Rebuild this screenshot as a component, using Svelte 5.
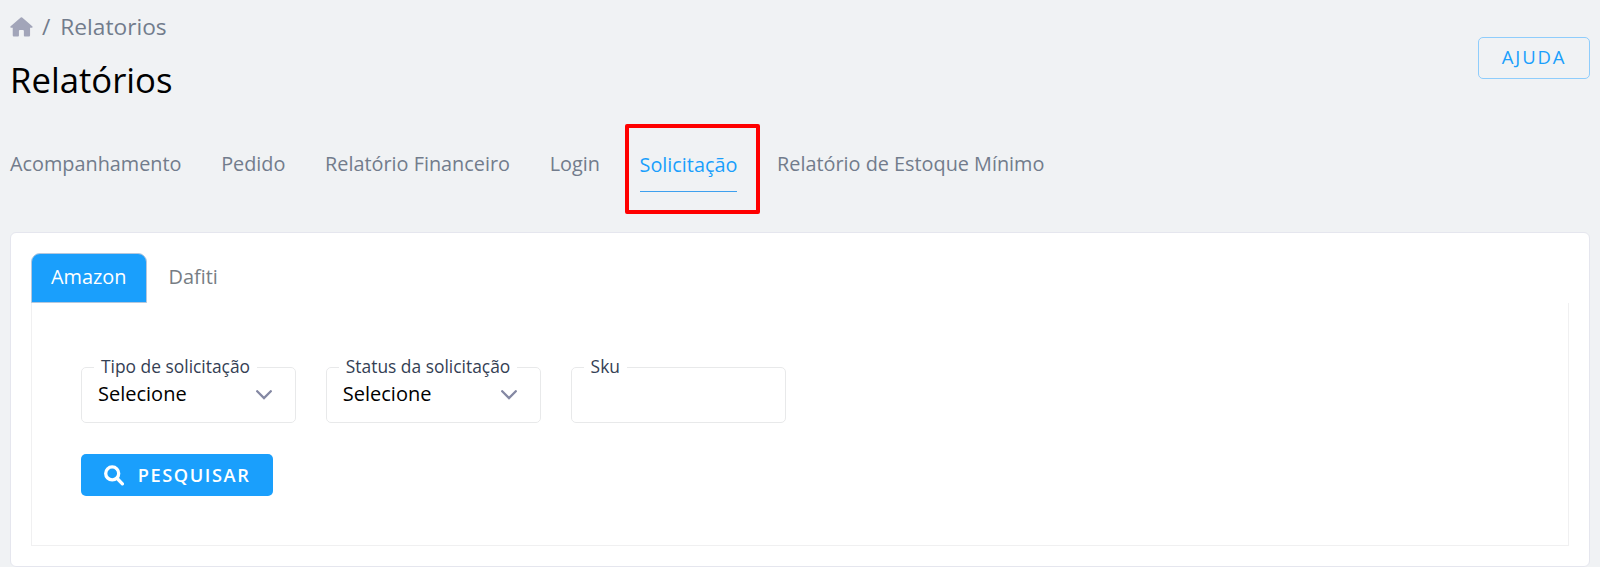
<script lang="ts">
  const reports = [
    'Acompanhamento',
    'Pedido',
    'Relatório Financeiro',
    'Login',
    'Solicitação',
    'Relatório de Estoque Mínimo'
  ];
  const markets = ['Amazon', 'Dafiti'];
  const selects = ['Tipo de solicitação', 'Status da solicitação'];

  let activeReport: string = $state('Solicitação');
  let activeMarket: string = $state('Amazon');
  let sku: string = $state('');
</script>

<div class="page">
  <header class="header">
    <div class="heading">
      <nav class="breadcrumb">
        <svg class="home" viewBox="0 0 24 21" width="23" height="20">
          <path d="M12.7 .5a1.2 1.2 0 0 0-1.5 0L.6 9.6c-.8.7-.4 1.7.5 1.7h1.7v7.8c0 .8.6 1.4 1.4 1.4h3.9c.7 0 1.2-.5 1.2-1.2v-4.4c0-.7.5-1.2 1.2-1.2h2.8c.7 0 1.2.5 1.2 1.2v4.4c0 .7.5 1.2 1.2 1.2h3.9c.8 0 1.4-.6 1.4-1.4v-7.8h1.8c.9 0 1.3-1 .5-1.7z" />
        </svg>
        <span class="slash">/</span>
        <span>Relatorios</span>
      </nav>
      <h1>Relatórios</h1>
    </div>
    <button class="help">AJUDA</button>
  </header>

  <nav class="reports">
    {#each reports as report}
      <button class="report" class:active={report === activeReport} onclick={() => (activeReport = report)}>
        {report}
      </button>
    {/each}
  </nav>

  <section class="card">
    <div class="tabs">
      {#each markets as market}
        <button class="tab" class:active={market === activeMarket} onclick={() => (activeMarket = market)}>
          {market}
        </button>
      {/each}
    </div>
    <div class="pane">
      <div class="fields">
        {#each selects as label}
          <fieldset class="field">
            <legend>{label}</legend>
            <button class="select">
              <span>Selecione</span>
              <svg viewBox="0 0 16 10" width="16" height="10">
                <path d="M1.2 1.2 8 8l6.8-6.8" />
              </svg>
            </button>
          </fieldset>
        {/each}
        <fieldset class="field">
          <legend>Sku</legend>
          <input aria-label="Sku" bind:value={sku} />
        </fieldset>
      </div>
      <button class="search">
        <svg viewBox="0 0 20 21" width="20" height="21">
          <circle cx="8.2" cy="8.4" r="6.5" />
          <path d="m13.2 13.5 5.2 5.3" />
        </svg>
        <span>PESQUISAR</span>
      </button>
    </div>
  </section>
</div>

<style>
  :global(body) {
    margin: 0;
    background: #f0f2f4;
  }
  .page {
    box-sizing: border-box;
    height: 567px;
    padding: 0 10px;
    overflow: hidden;
    font-family: 'Open Sans', 'Noto Sans', sans-serif;
    color: #727c8c;
  }
  button {
    padding: 0;
    border: 0;
    background: none;
    color: inherit;
    font: inherit;
    cursor: pointer;
  }
  .header {
    display: flex;
    justify-content: space-between;
    height: 124px;
  }
  .breadcrumb {
    display: flex;
    align-items: center;
    height: 30px;
    padding-top: 12px;
    font-size: 22.7px;
    line-height: 30px;
  }
  .home {
    margin-right: 9px;
    fill: #a2a5b9;
  }
  .slash {
    margin-right: 10px;
  }
  h1 {
    margin: 12.5px 0 0;
    color: #000;
    font-size: 34.7px;
    font-weight: 400;
    line-height: 50px;
  }
  .help {
    box-sizing: border-box;
    width: 112px;
    height: 42px;
    margin-top: 37px;
    padding-bottom: 3px;
    border: 1px solid #8fcdfc;
    border-radius: 5px;
    color: #1a9ffc;
    font-size: 18.5px;
    letter-spacing: 1.8px;
  }
  .reports {
    display: flex;
    align-items: center;
    height: 90px;
    gap: 39.7px;
    margin-bottom: 18px;
  }
  .report {
    box-sizing: border-box;
    height: 46px;
    padding-bottom: 10px;
    font-size: 19.83px;
    line-height: 28px;
    white-space: nowrap;
  }
  .report.active {
    position: relative;
    padding-bottom: 7px;
    border-bottom: 1px solid #3ea0ee;
    color: #1a9ffc;
  }
  /* highlight frame around the selected report */
  .report.active::after {
    content: '';
    position: absolute;
    inset: -22px -22.5px -23px -15px;
    border: 4px solid #f00;
    border-radius: 2px;
  }
  .card {
    box-sizing: border-box;
    height: 335px;
    padding: 20px 20px 0;
    border: 1px solid #e5e6ee;
    border-radius: 6px;
    background: #fff;
  }
  .tabs {
    display: flex;
    height: 50px;
  }
  .tab {
    box-sizing: border-box;
    height: 50px;
    padding: 0 20px 3px;
    border: 1px solid transparent;
    border-radius: 9px 9px 0 0;
    color: #777d84;
    font-size: 19.9px;
  }
  .tab.active {
    padding: 0 19px 3px;
    border-color: #b5c7dc;
    background: #1a9ffc;
    color: #fff;
  }
  .tab.active + .tab {
    padding-left: 21px;
  }
  .pane {
    box-sizing: border-box;
    height: 243px;
    padding: 53px 49px 0;
    border: 1px solid #f0f0f1;
    border-top: 0;
  }
  .fields {
    display: flex;
    gap: 29.8px;
  }
  .field {
    box-sizing: border-box;
    width: 215px;
    min-width: 0;
    height: 67px;
    margin: 0;
    padding: 0 23px 0 16px;
    border: 1px solid #e8e9ea;
    border-radius: 5px;
  }
  legend {
    height: 22px;
    margin-left: -4px;
    padding: 0 7px;
    color: #344054;
    font-size: 17.4px;
    line-height: 21px;
    white-space: nowrap;
  }
  .select {
    display: flex;
    align-items: center;
    justify-content: space-between;
    width: 100%;
    height: 31px;
    color: #000;
    font-size: 20px;
  }
  .select svg {
    margin-top: 2px;
    fill: none;
    stroke: #8488a3;
    stroke-width: 2.3;
    stroke-linecap: round;
  }
  input {
    width: 100%;
    height: 30px;
    padding: 0;
    border: 0;
    outline: 0;
    background: none;
    font: inherit;
  }
  .search {
    display: flex;
    align-items: center;
    justify-content: center;
    gap: 14px;
    width: 192px;
    height: 42px;
    margin-top: 31px;
    border-radius: 5px;
    background: #1a9ffc;
    color: #fff;
    font-size: 18.2px;
    font-weight: 600;
    letter-spacing: 1.6px;
  }
  .search span {
    padding-bottom: 1px;
  }
  .search svg {
    fill: none;
    stroke: #fff;
    stroke-width: 3.3;
    stroke-linecap: round;
  }
</style>
